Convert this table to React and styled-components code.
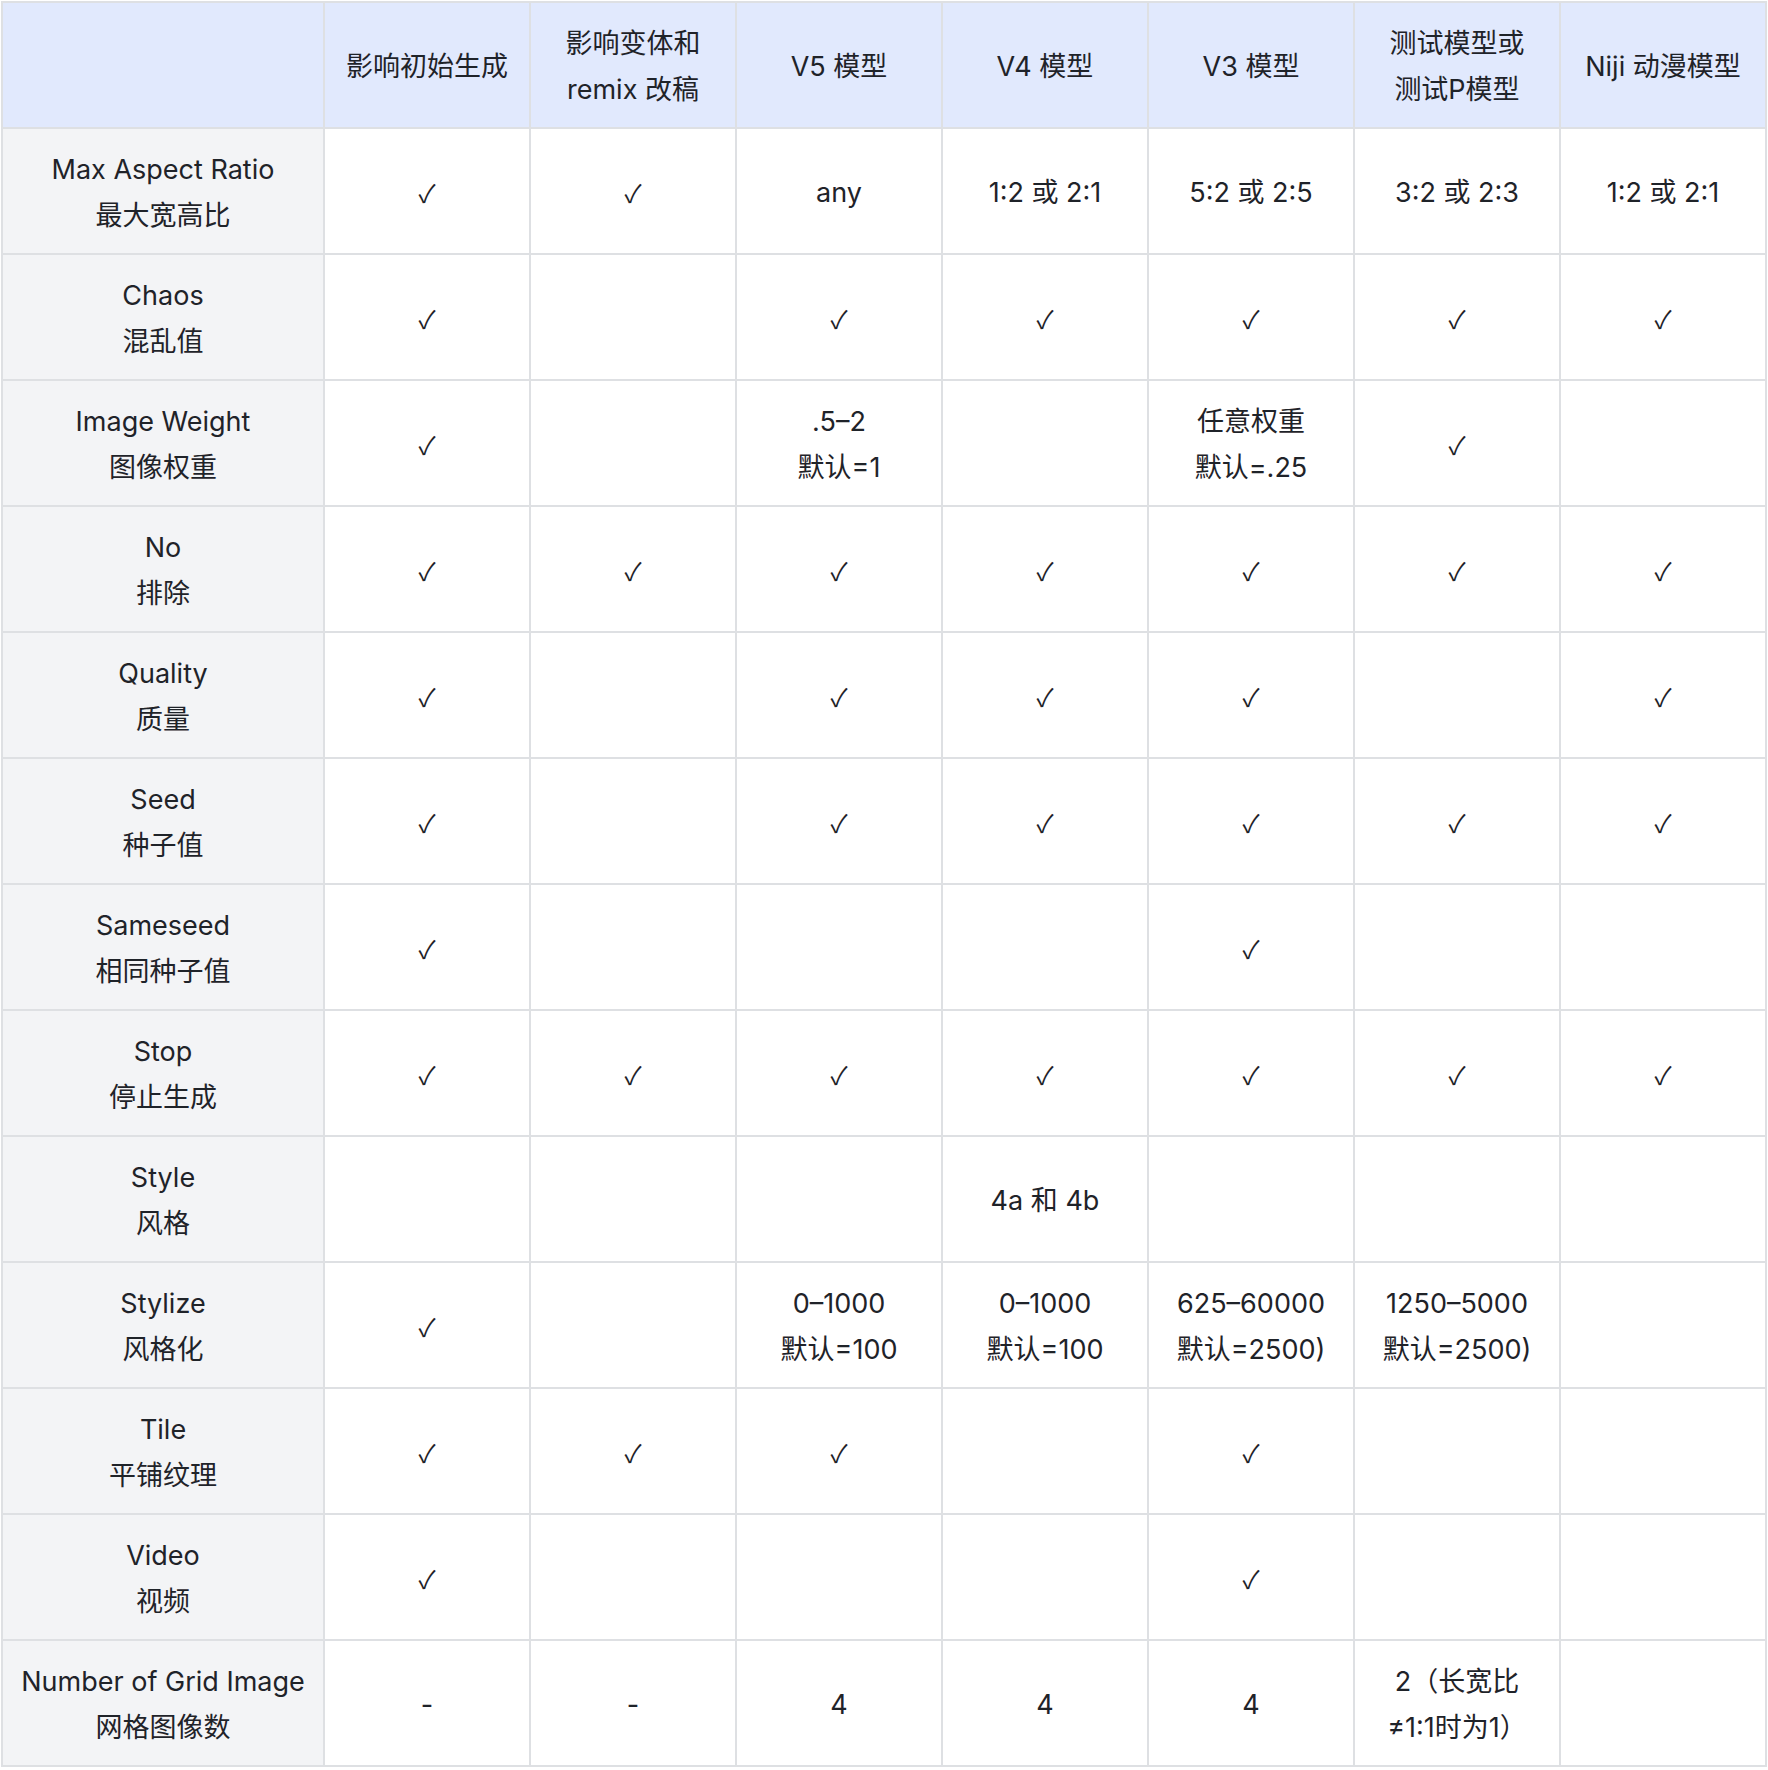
import styled, { createGlobalStyle } from "styled-components";

const GlobalStyle = createGlobalStyle`
  body {
    margin: 0;
    background: #ffffff;
    font-family: Inter, "Noto Sans CJK SC", sans-serif;
    color: #1f2329;
  }
`;

const Page = styled.div`
  padding: 1px 0 0 1px;
`;

const Table = styled.table`
  width: 1766px;
  table-layout: fixed;
  border-collapse: collapse;
  border: 2px solid #dee0e3;
  font-size: 27px;
  line-height: 46px;
`;

const HeadCell = styled.th`
  background: #e1e9fd;
  border: 2px solid #dee0e3;
  padding: 18px 10px 14px;
  font-weight: 400;
  text-align: center;
  white-space: nowrap;
`;

const LabelCell = styled.td`
  background: #f3f4f6;
  border: 2px solid #dee0e3;
  padding: 18px 10px 14px;
  text-align: center;
  white-space: nowrap;
`;

const Cell = styled.td`
  background: #ffffff;
  border: 2px solid #dee0e3;
  padding: 18px 10px 14px;
  text-align: center;
  white-space: nowrap;
`;

const Line = styled.div``;

const Check = styled.span`
  font-family: "Noto Sans CJK SC", sans-serif;
  font-size: 25px;
`;

const V = "✓";

const headers = [
  "",
  "影响初始生成",
  "影响变体和\nremix 改稿",
  "V5 模型",
  "V4 模型",
  "V3 模型",
  "测试模型或\n测试P模型",
  "Niji 动漫模型",
];

const rows = [
  ["Max Aspect Ratio\n最大宽高比", V, V, "any", "1:2 或 2:1", "5:2 或 2:5", "3:2 或 2:3", "1:2 或 2:1"],
  ["Chaos\n混乱值", V, "", V, V, V, V, V],
  ["Image Weight\n图像权重", V, "", ".5–2\n默认=1", "", "任意权重\n默认=.25", V, ""],
  ["No\n排除", V, V, V, V, V, V, V],
  ["Quality\n质量", V, "", V, V, V, "", V],
  ["Seed\n种子值", V, "", V, V, V, V, V],
  ["Sameseed\n相同种子值", V, "", "", "", V, "", ""],
  ["Stop\n停止生成", V, V, V, V, V, V, V],
  ["Style\n风格", "", "", "", "4a 和 4b", "", "", ""],
  ["Stylize\n风格化", V, "", "0–1000\n默认=100", "0–1000\n默认=100", "625–60000\n默认=2500)", "1250–5000\n默认=2500)", ""],
  ["Tile\n平铺纹理", V, V, V, "", V, "", ""],
  ["Video\n视频", V, "", "", "", V, "", ""],
  ["Number of Grid Image\n网格图像数", "-", "-", "4", "4", "4", " 2（长宽比\n≠1:1时为1）", ""],
];

function Content({ value }) {
  if (value === V) return <Check>{V}</Check>;
  return value.split("\n").map((line, i) => <Line key={i}>{line}</Line>);
}

export default function App() {
  return (
    <Page>
      <GlobalStyle />
      <Table>
        <colgroup>
          <col style={{ width: 322 }} />
          {headers.slice(1).map((_, i) => (
            <col key={i} style={{ width: 206 }} />
          ))}
        </colgroup>
        <thead>
          <tr>
            {headers.map((h, i) => (
              <HeadCell key={i}>
                <Content value={h} />
              </HeadCell>
            ))}
          </tr>
        </thead>
        <tbody>
          {rows.map((row, r) => (
            <tr key={r}>
              <LabelCell>
                <Content value={row[0]} />
              </LabelCell>
              {row.slice(1).map((c, i) => (
                <Cell key={i}>
                  <Content value={c} />
                </Cell>
              ))}
            </tr>
          ))}
        </tbody>
      </Table>
    </Page>
  );
}
